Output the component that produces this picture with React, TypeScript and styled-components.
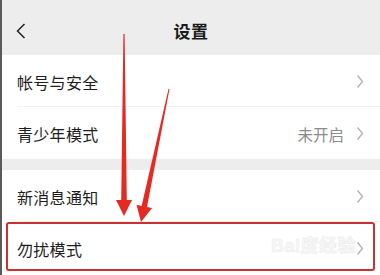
import React from 'react';
import styled, { createGlobalStyle, css } from 'styled-components';

const GlobalStyle = createGlobalStyle`
  html, body {
    margin: 0;
    padding: 0;
    background: #ffffff;
  }
  body {
    font-family: "Noto Sans CJK SC", "Noto Sans", sans-serif;
  }
`;

const Screen = styled.div`
  position: relative;
  width: 380px;
  height: 275px;
  overflow: hidden;
  background: #ffffff;
  border-left: 2px solid #5a5a5a;
  box-sizing: border-box;
  display: flex;
  flex-direction: column;
`;

const Header = styled.header`
  height: 55px;
  flex: none;
  background: #ededed;
  display: grid;
  grid-template-columns: 40px 1fr 40px;
  align-items: center;
`;

const BackButton = styled.div`
  display: flex;
  align-items: center;
  padding-left: 14px;
  padding-top: 6px;
`;

const Title = styled.h1`
  margin: 0;
  padding-top: 6px;
  text-align: center;
  font-size: 17px;
  font-weight: 600;
  color: #1b1b1b;
  letter-spacing: 0.5px;
`;

const Group = styled.section`
  display: flex;
  flex-direction: column;
  background: #ffffff;
`;

const Gap = styled.div`
  height: 11px;
  flex: none;
  background: #ededed;
`;

const Row = styled.div<{ $divider?: boolean; $highlight?: boolean }>`
  position: relative;
  height: 52px;
  flex: none;
  display: flex;
  align-items: center;
  padding: 1px 16px 0 15px;
  box-sizing: border-box;
  ${(p) =>
    p.$divider &&
    css`
      &::before {
        content: '';
        position: absolute;
        left: 15px;
        right: 0;
        bottom: 0;
        height: 1px;
        background: #f2f2f2;
      }
    `}
  ${(p) =>
    p.$highlight &&
    css`
      &::after {
        content: '';
        position: absolute;
        left: 4px;
        right: 5px;
        top: 0;
        bottom: 3px;
        border: 2px solid #c8312e;
        border-radius: 3px;
      }
    `}
`;

const Label = styled.span`
  flex: 1;
  font-size: 16px;
  color: #1e1e1e;
  letter-spacing: 0.3px;
`;

const Value = styled.span`
  font-size: 15.5px;
  color: #8c8c8c;
  margin-right: 12px;
`;

const Watermark = styled.span`
  position: absolute;
  right: 24px;
  top: 9px;
  font-family: "Liberation Sans", "Noto Sans CJK SC", sans-serif;
  font-size: 18px;
  font-weight: 700;
  color: #f7f7f7;
  letter-spacing: 0.5px;
  -webkit-text-stroke: 0.5px #ebebeb;
`;

const Overlay = styled.svg`
  position: absolute;
  left: -2px;
  top: 0;
  pointer-events: none;
`;

const Chevron = () => (
  <svg width="8" height="15" viewBox="0 0 8 15">
    <path d="M1.5 1.5 L6.5 7.5 L1.5 13.5" fill="none" stroke="#b4b4b4" strokeWidth="1.4" />
  </svg>
);

const BackIcon = () => (
  <svg width="10" height="16" viewBox="0 0 10 16">
    <path d="M8.5 1 L1.5 8 L8.5 15" fill="none" stroke="#222" strokeWidth="1.5" />
  </svg>
);

type Item = { label: string; value?: string; highlight?: boolean; watermark?: boolean };

const groups: Item[][] = [
  [{ label: '帐号与安全' }, { label: '青少年模式', value: '未开启' }],
  [{ label: '新消息通知' }, { label: '勿扰模式', highlight: true, watermark: true }],
];

export default function App() {
  return (
    <>
      <GlobalStyle />
      <Screen>
        <Header>
          <BackButton>
            <BackIcon />
          </BackButton>
          <Title>设置</Title>
          <div />
        </Header>
        {groups.map((items, gi) => (
          <React.Fragment key={gi}>
            {gi > 0 && <Gap />}
            <Group>
              {items.map((item, i) => (
                <Row key={item.label} $divider={i < items.length - 1} $highlight={item.highlight}>
                  <Label>{item.label}</Label>
                  {item.watermark && <Watermark>Bai度经验</Watermark>}
                  {item.value && <Value>{item.value}</Value>}
                  <Chevron />
                </Row>
              ))}
            </Group>
          </React.Fragment>
        ))}
        <Overlay width="380" height="275" viewBox="0 0 380 275">
          <polygon
            points="123.4,34 124.6,34 126.8,200 132,200 124,216 116,200 121.2,200"
            fill="#e42a22"
          />
          <polygon
            points="168.5,88.9 169.5,89.1 147,206.9 152.1,208 141,222 136.5,204.8 141.6,205.9"
            fill="#e42a22"
          />
        </Overlay>
      </Screen>
    </>
  );
}
